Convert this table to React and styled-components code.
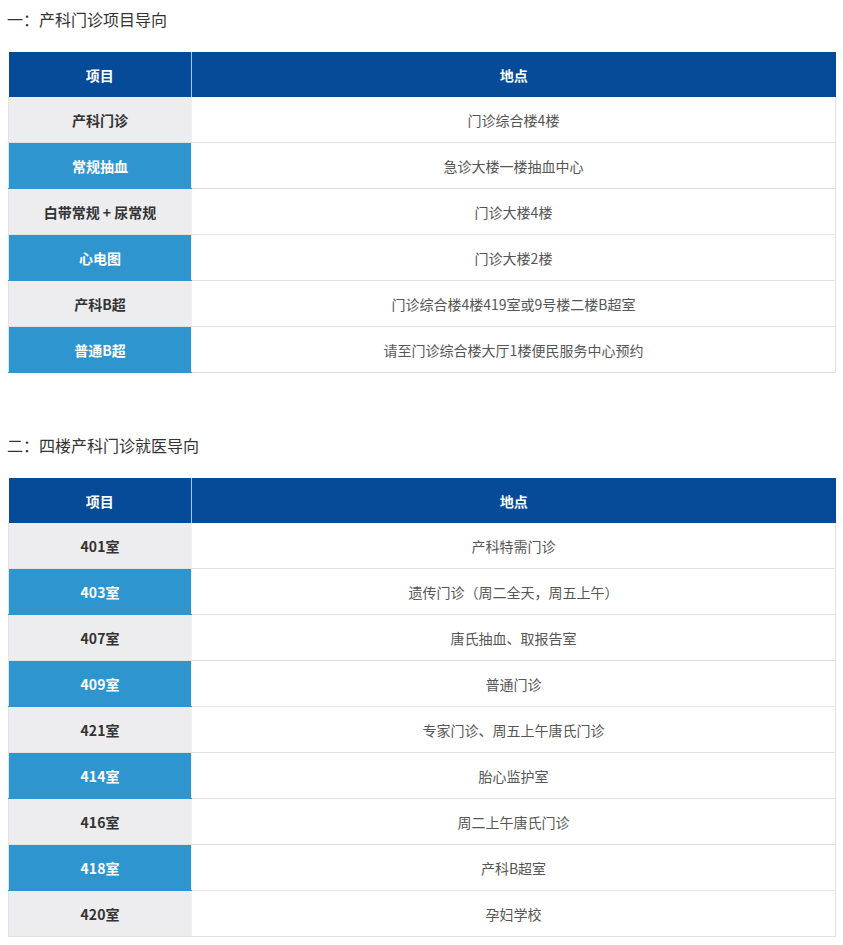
import React from "react";
import styled, { createGlobalStyle } from "styled-components";

const Global = createGlobalStyle`
  html, body { margin: 0; padding: 0; background: #fff; }
  body { font-family: "Noto Sans CJK SC", "Noto Sans", sans-serif; }
`;

const Page = styled.div`
  padding: 7px 7px 0 8px;
  width: 843px;
  box-sizing: border-box;
`;

const Title = styled.div`
  font-size: 16px;
  line-height: 24px;
  color: #333;
  margin-top: ${(p) => p.$top || 0}px;
  margin-left: -1px;
`;

const Table = styled.table`
  width: 828px;
  border-collapse: collapse;
  table-layout: fixed;
  margin-top: 21px;
  font-size: 14px;
`;

const HeadCell = styled.th`
  height: 45px;
  padding: 0;
  background: #064b97;
  color: #fff;
  font-weight: 700;
  text-align: center;
  border-left: ${(p) => (p.$divider ? "1px solid #9dd0ee" : "none")};
`;

const KeyCell = styled.td`
  height: 45px;
  padding: 0;
  text-align: center;
  font-weight: 700;
  background: ${(p) => (p.$blue ? "#2f95cf" : "#ededef")};
  color: ${(p) => (p.$blue ? "#fff" : "#333")};
  border-bottom: 1px solid ${(p) => (p.$blue ? "#2f95cf" : "#e2e2e2")};
  border-left: 1px solid #e2e2e2;
`;

const ValueCell = styled.td`
  padding: 0;
  text-align: center;
  color: #555;
  background: #fff;
  border-bottom: 1px solid #e2e2e2;
  border-right: 1px solid #e2e2e2;
  border-left: 1px solid #f0f0f0;
`;

const table1 = [
  ["产科门诊", "门诊综合楼4楼"],
  ["常规抽血", "急诊大楼一楼抽血中心"],
  ["白带常规 + 尿常规", "门诊大楼4楼"],
  ["心电图", "门诊大楼2楼"],
  ["产科B超", "门诊综合楼4楼419室或9号楼二楼B超室"],
  ["普通B超", "请至门诊综合楼大厅1楼便民服务中心预约"],
];

const table2 = [
  ["401室", "产科特需门诊"],
  ["403室", "遗传门诊（周二全天，周五上午）"],
  ["407室", "唐氏抽血、取报告室"],
  ["409室", "普通门诊"],
  ["421室", "专家门诊、周五上午唐氏门诊"],
  ["414室", "胎心监护室"],
  ["416室", "周二上午唐氏门诊"],
  ["418室", "产科B超室"],
  ["420室", "孕妇学校"],
];

function GuideTable({ rows }) {
  return (
    <Table>
      <colgroup>
        <col style={{ width: "183px" }} />
        <col />
      </colgroup>
      <thead>
        <tr>
          <HeadCell>项目</HeadCell>
          <HeadCell $divider>地点</HeadCell>
        </tr>
      </thead>
      <tbody>
        {rows.map(([k, v], i) => (
          <tr key={k}>
            <KeyCell $blue={i % 2 === 1}>{k}</KeyCell>
            <ValueCell>{v}</ValueCell>
          </tr>
        ))}
      </tbody>
    </Table>
  );
}

export default function App() {
  return (
    <Page>
      <Global />
      <Title>一：产科门诊项目导向</Title>
      <GuideTable rows={table1} />
      <Title $top={60}>二：四楼产科门诊就医导向</Title>
      <GuideTable rows={table2} />
    </Page>
  );
}
